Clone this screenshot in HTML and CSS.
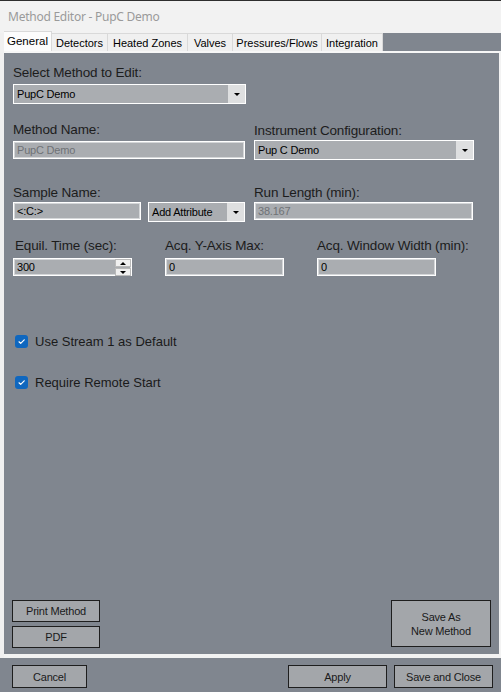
FILE: index.html
```html
<!DOCTYPE html>
<html>
<head>
<meta charset="utf-8">
<title>Method Editor - PupC Demo</title>
<link rel="stylesheet" href="styles.css">
</head>
<body>
<div class="window">
  <div class="titlebar">Method Editor - PupC Demo</div>
  <div class="tabctl">
    <div class="tabs">
      <div class="tab active t-general">General</div>
      <div class="tab t-detectors">Detectors</div>
      <div class="tab t-heated">Heated Zones</div>
      <div class="tab t-valves">Valves</div>
      <div class="tab t-press">Pressures/Flows</div>
      <div class="tab t-integ">Integration</div>
    </div>
    <div class="page">
      <div class="content">
        <div class="lbl first">Select Method to Edit:</div>
        <div class="combo c-method"><span class="val">PupC Demo</span><span class="arrow"></span></div>

        <div class="row r2">
          <div class="col col-left">
            <div class="lbl">Method Name:</div>
            <div class="text disabled f-name">PupC Demo</div>
          </div>
          <div class="col col-right">
            <div class="lbl lbl-r">Instrument Configuration:</div>
            <div class="combo c-instr"><span class="val">Pup C Demo</span><span class="arrow"></span></div>
          </div>
        </div>

        <div class="row r3">
          <div class="col col-left">
            <div class="lbl">Sample Name:</div>
            <div class="fields">
              <div class="text f-sample">&lt;:C:&gt;</div>
              <div class="combo c-attr"><span class="val">Add Attribute</span><span class="arrow"></span></div>
            </div>
          </div>
          <div class="col col-right">
            <div class="lbl">Run Length (min):</div>
            <div class="fields">
              <div class="text disabled f-run">38.167</div>
            </div>
          </div>
        </div>

        <div class="row r4">
          <div class="col col-small">
            <div class="lbl lbl-equil">Equil. Time (sec):</div>
            <div class="spin">
              <div class="text f-small">300</div>
              <div class="spinbtns">
                <span class="sb up"></span>
                <span class="sb down"></span>
              </div>
            </div>
          </div>
          <div class="col col-small">
            <div class="lbl">Acq. Y-Axis Max:</div>
            <div class="text f-small">0</div>
          </div>
          <div class="col col-small">
            <div class="lbl">Acq. Window Width (min):</div>
            <div class="text f-small">0</div>
          </div>
        </div>

        <div class="check c1">
          <span class="box"><svg width="13" height="13" viewBox="0 0 13 13"><path d="M4 6.8 L5.7 8.4 L9.2 4.8" fill="none" stroke="#fff" stroke-width="1.2" stroke-linecap="round" stroke-linejoin="round"/></svg></span>
          <span class="ctext">Use Stream 1 as Default</span>
        </div>
        <div class="check c2">
          <span class="box"><svg width="13" height="13" viewBox="0 0 13 13"><path d="M4 6.8 L5.7 8.4 L9.2 4.8" fill="none" stroke="#fff" stroke-width="1.2" stroke-linecap="round" stroke-linejoin="round"/></svg></span>
          <span class="ctext">Require Remote Start</span>
        </div>
      </div>
      <div class="page-buttons">
        <div class="btn-stack">
          <div class="btn b-print">Print Method</div>
          <div class="btn b-print">PDF</div>
        </div>
        <div class="btn b-saveas">Save As<br>New Method</div>
      </div>
    </div>
  </div>
  <div class="bottombar">
    <div class="btn b-cancel">Cancel</div>
    <div class="spacer"></div>
    <div class="btn b-wide">Apply</div>
    <div class="btn b-wide">Save and Close</div>
  </div>
</div>
</body>
</html>
```

FILE: styles.css
```css
* { box-sizing: border-box; }
html, body { margin: 0; padding: 0; }
body {
  width: 501px;
  height: 692px;
  overflow: hidden;
  background: #80868f;
  font-family: "Liberation Sans", Arial, sans-serif;
  color: #1e1e1e;
}
.window {
  display: flex;
  flex-direction: column;
  width: 501px;
  height: 692px;
}
.titlebar {
  height: 33px;
  border-top: 1px solid #2e2e2e;
  background: #f2f2f2;
  color: #9a9a9a;
  font-family: "Noto Sans", "Open Sans", sans-serif;
  font-size: 12px;
  letter-spacing: -0.25px;
  line-height: 31px;
  padding-left: 8px;
}
.tabctl {
  border-left: 4px solid #f0f0f0;
  display: flex;
  flex-direction: column;
}
.tabs {
  height: 18px;
  display: flex;
  align-items: flex-end;
  position: relative;
  z-index: 1;
}
.tab {
  height: 18px;
  background: #f0f0f0;
  border: 1px solid #d9d9d9;
  border-bottom: none;
  border-left: none;
  font-size: 11px;
  line-height: 18px;
  text-align: center;
  color: #000;
  white-space: nowrap;
}
.tab.active {
  height: 20px;
  background: #fcfcfc;
  line-height: 19px;
  border-left: none;
  font-size: 11.5px;
}
.t-general { width: 48px; }
.t-detectors { width: 56px; }
.t-heated { width: 80px; }
.t-valves { width: 45px; }
.t-press { width: 89px; }
.t-integ { width: 61px; }

.page {
  height: 607px;
  border-top: 2px solid #f7f7f7;
  border-right: 2px solid #f3f3f3;
  border-bottom: 4px solid #f3f3f3;
  display: flex;
  flex-direction: column;
}
.content {
  flex: 1;
  padding-left: 9px;
}
.lbl {
  font-size: 13.5px;
  line-height: 16px;
  height: 16px;
  color: #1c1c1c;
  white-space: nowrap;
  letter-spacing: -0.15px;
}
.lbl.first { margin-top: 12px; }

.combo {
  height: 20px;
  background: #aaadb1;
  border: 1px solid #ffffff;
  display: flex;
  align-items: stretch;
  font-size: 11px;
  color: #000;
}
.combo .val {
  flex: 1;
  padding-left: 3px;
  line-height: 18px;
  white-space: nowrap;
  letter-spacing: -0.2px;
}
.combo .arrow {
  width: 17px;
  background: #dedfe0;
  position: relative;
}
.combo .arrow::after {
  content: "";
  position: absolute;
  left: 6px;
  top: 8px;
  border-left: 3px solid transparent;
  border-right: 3px solid transparent;
  border-top: 3px solid #000;
}
.c-method { width: 233px; margin-top: 3px; }

.row { display: flex; }
.r2 { margin-top: 18px; gap: 9px; }
.r3 { margin-top: 25px; gap: 9px; }
.r4 { margin-top: 16px; gap: 33px; }
.col { display: flex; flex-direction: column; }
.col-left { width: 232px; }
.col-right { width: 220px; }
.col-small { width: 119px; }

.text {
  height: 18px;
  background: #aaadb1;
  border: 1px solid #ffffff;
  box-shadow: inset 0 0 0 1px #d4d6d8;
  font-size: 11px;
  line-height: 16px;
  padding-left: 3px;
  color: #000;
  letter-spacing: -0.2px;
  white-space: nowrap;
}
.text.disabled { color: #6f7276; }
.f-name { width: 232px; margin-top: 3px; }
.lbl-r { margin-top: 1px; }
.c-instr { width: 220px; margin-top: 1px; }

.fields { display: flex; gap: 7px; margin-top: 1px; align-items: flex-start; }
.f-sample { width: 128px; }
.c-attr { width: 97px; }
.f-run { width: 219px; }

.lbl-equil { padding-left: 2px; }
.f-small { width: 119px; margin-top: 4px; }
.spin { position: relative; }
.spinbtns {
  position: absolute;
  right: 1px;
  top: 5px;
  width: 16px;
  height: 17px;
  display: flex;
  flex-direction: column;
  gap: 1px;
}
.sb {
  flex: 1;
  background: #f0f0f0;
  border: 1px solid #b9b9b9;
  position: relative;
}
.sb::after {
  content: "";
  position: absolute;
  left: 4px;
  top: 2px;
  border-left: 3px solid transparent;
  border-right: 3px solid transparent;
}
.sb.up::after { border-bottom: 3px solid #000; }
.sb.down::after { border-top: 3px solid #000; }

.check {
  display: flex;
  align-items: center;
  height: 16px;
  padding-left: 2px;
  gap: 7px;
}
.c1 { margin-top: 57px; }
.c2 { margin-top: 25px; }
.box {
  width: 13px;
  height: 13px;
  border-radius: 3px;
  background: #0f67bf;
  display: block;
}
.box svg { display: block; }
.ctext {
  font-size: 13px;
  color: #1a1a1a;
  white-space: nowrap;
}

.btn {
  background: #a3a6aa;
  border: 1px solid #1e1e1e;
  font-size: 11px;
  color: #1a1a1a;
  display: flex;
  align-items: center;
  justify-content: center;
  text-align: center;
  line-height: 14px;
  letter-spacing: -0.2px;
  white-space: nowrap;
}
.page-buttons {
  display: flex;
  justify-content: space-between;
  align-items: flex-start;
  padding: 0 8px 6px 8px;
}
.btn-stack { display: flex; flex-direction: column; gap: 4px; }
.b-print { width: 88px; height: 22px; }
.b-saveas { width: 100px; height: 47px; }

.bottombar {
  height: 34px;
  display: flex;
  align-items: flex-start;
  padding: 7px 8px 0 12px;
  gap: 7px;
}
.spacer { flex: 1; }
.b-cancel { width: 75px; height: 23px; }
.b-wide { width: 99px; height: 23px; }
```
